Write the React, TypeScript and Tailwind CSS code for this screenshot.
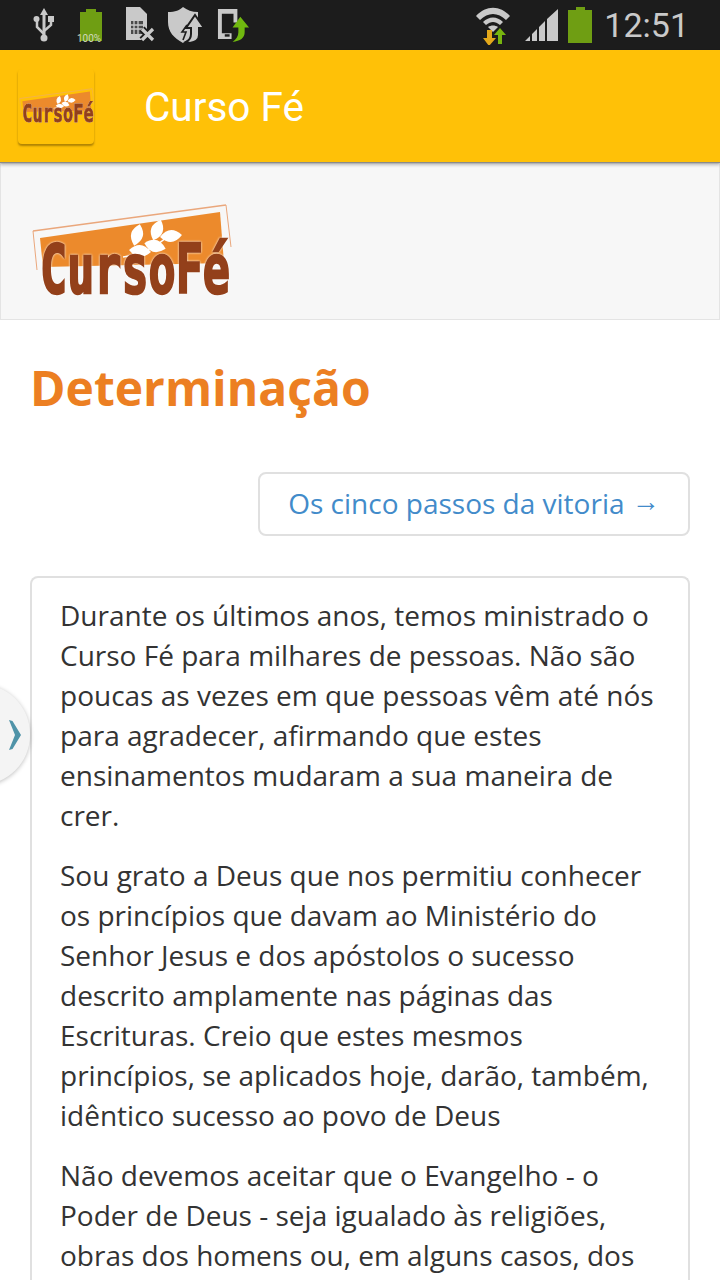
const OPEN = "font-['Open_Sans',sans-serif]";

const LEAVES = [
  "translate(106 30) rotate(-75)",
  "translate(126 25) rotate(-70)",
  "translate(140 31) rotate(-5)",
  "translate(124 41) rotate(15)",
  "translate(109 46) rotate(5)",
];

function Logo({ className }: { className: string }) {
  return (
    <svg viewBox="0 0 200 92" className={`overflow-visible ${className}`}>
      <path d="M2 26 L195 0" stroke="#eaa77c" strokeWidth="1.5" fill="none" />
      <path d="M2 26 L6 65" stroke="#eaa77c" strokeWidth="1" fill="none" />
      <path d="M195 0 L200 42" stroke="#eaa77c" strokeWidth="1" fill="none" />
      <polygon points="9,33 189,7 193,58 12,62" fill="#ec8a2c" />
      <path d="M92 52 C108 50 122 44 135 33" stroke="#fff" strokeWidth="1.5" fill="none" />
      {LEAVES.map((t) => (
        <path key={t} d="M-11 0 Q0 -12 11 0 Q0 12 -11 0 Z" transform={t} fill="#fff" />
      ))}
      <text
        x="9"
        y="88"
        textLength="190"
        lengthAdjust="spacingAndGlyphs"
        fontFamily="'DejaVu Sans Mono',monospace"
        fontWeight="700"
        fontSize="68"
        fill="#93401a"
        stroke="#93401a"
        strokeWidth="2.5"
        className="[filter:drop-shadow(0_0_1px_white)]"
      >
        CursoFé
      </text>
    </svg>
  );
}

function StatusLeft() {
  return (
    <div className="flex items-center">
      <svg viewBox="0 0 24 36" className="ml-[32px] w-[24px] h-[36px]">
        <path d="M12 1 L16 8 H13.5 V29 H10.5 V8 H8 Z" fill="#c9c9c9" />
        <path d="M12 27 L5 20 V14 M12 24 L19 18 V13" stroke="#c9c9c9" strokeWidth="2.5" fill="none" />
        <circle cx="4.5" cy="12" r="3" fill="#c9c9c9" />
        <rect x="16" y="9" width="6" height="6" fill="#c9c9c9" />
        <circle cx="12" cy="31" r="3.5" fill="#c9c9c9" />
      </svg>
      <div className="relative ml-[24px] w-[22px] h-[33px]">
        <div className="mx-auto w-[10px] h-[3px] bg-[#6f9e13]" />
        <div className="w-[22px] h-[29px] bg-[#6f9e13]" />
        <span className="absolute left-[-3px] bottom-[-2px] text-[10px] leading-[11px] text-[#cfd8bd] font-['Roboto',sans-serif]">100%</span>
      </div>
      <svg viewBox="0 0 30 36" className="ml-[23px] w-[30px] h-[36px]">
        <path d="M1 0 H15 L22 7 V33 H1 Z" fill="#c9c9c9" />
        <path d="M6 14 H18 V27 H6 Z" fill="#4a4a4a" />
        <path d="M9 14 V27 M13 14 V27 M6 18 H18 M6 22 H18" stroke="#c9c9c9" strokeWidth="1.3" />
        <path d="M17 22 L28 33 M28 22 L17 33" stroke="#1c1c1c" strokeWidth="7" />
        <path d="M17 22 L28 33 M28 22 L17 33" stroke="#c9c9c9" strokeWidth="3.2" />
      </svg>
      <svg viewBox="0 0 36 36" className="ml-[13px] w-[36px] h-[36px]">
        <path d="M0 5 C7 5 12 3 15 0 C19 3 24 5 30 5 V15 C30 25 24 31 15 36 C6 31 0 25 0 15 Z" fill="#c9c9c9" />
        <path d="M27 8 L36 21 H31 V28 C31 32 28 35 22 36 L18 35 C22 33 23 30 23 27 V21 H18 Z" fill="#c9c9c9" stroke="#1c1c1c" strokeWidth="2" />
        <path d="M19 18 L14 25 H18 L15 33" stroke="#1c1c1c" strokeWidth="1.6" fill="none" />
      </svg>
      <svg viewBox="0 0 34 34" className="ml-[13px] w-[33px] h-[33px]">
        <path d="M1 0 H21 V14 H17 V5 H5 V25 H15 V31 H1 Z" fill="#c9c9c9" />
        <rect x="8" y="26" width="5" height="2.5" fill="#1c1c1c" />
        <path d="M24 8 L33 19 H28.5 V24 C28.5 30 24 33 16 34 C20 31 22 28 22 24 V19 H16 Z" fill="#70b80f" />
      </svg>
    </div>
  );
}

function StatusRight() {
  return (
    <div className="flex items-center">
      <svg viewBox="0 0 36 40" className="w-[36px] h-[40px]">
        <path d="M1 11 C11 0 25 0 35 11 L31 15 C23 7 13 7 5 15 Z" fill="#c9c9c9" />
        <path d="M8 17 C14 11 22 11 28 17 L25 20 C20 16 16 16 11 20 Z" fill="#c9c9c9" />
        <path d="M13 22 C16 20 20 20 23 22 L18 27 Z" fill="#c9c9c9" />
        <path d="M13 26 H18 V34 H22 L15 42 L9 34 H13 Z" fill="#e3a81a" transform="translate(-1 -1)" />
        <path d="M21 33 H25 V24 H29 L23 17 L17 24 H21 Z" fill="#77b50f" transform="translate(2 6)" />
      </svg>
      <svg viewBox="0 0 34 34" className="ml-[14px] w-[34px] h-[34px]">
        <path d="M0 33 L5 28 V33 Z M7 26 L12 21 V33 H7 Z M14 19 L20 13 V33 H14 Z M22 11 L33 1 V33 H22 Z" fill="#c9c9c9" />
      </svg>
      <div className="ml-[9px] w-[24px] h-[36px]">
        <div className="mx-auto w-[9px] h-[3px] bg-[#6f9e13]" />
        <div className="w-[24px] h-[33px] bg-[#6f9e13]" />
      </div>
      <span className="ml-[12px] mr-[31px] text-[#c9c9c9] text-[34px] leading-[40px] font-['Roboto',sans-serif]">12:51</span>
    </div>
  );
}

const PARAGRAPHS = [
  "Durante os últimos anos, temos ministrado o Curso Fé para milhares de pessoas. Não são poucas as vezes em que pessoas vêm até nós para agradecer, afirmando que estes ensinamentos mudaram a sua maneira de crer.",
  "Sou grato a Deus que nos permitiu conhecer os princípios que davam ao Ministério do Senhor Jesus e dos apóstolos o sucesso descrito amplamente nas páginas das Escrituras. Creio que estes mesmos princípios, se aplicados hoje, darão, também, idêntico sucesso ao povo de Deus",
  "Não devemos aceitar que o Evangelho - o Poder de Deus - seja igualado às religiões, obras dos homens ou, em alguns casos, dos",
];

export default function App() {
  return (
    <div className={`relative w-[720px] h-[1280px] overflow-hidden bg-white ${OPEN}`}>
      <div className="h-[50px] bg-[#1c1c1c] flex items-center justify-between">
        <StatusLeft />
        <StatusRight />
      </div>

      <header className="relative z-10 h-[113px] bg-[#ffc107] flex items-center border-b border-[#8a8a8a] shadow-[0_2px_3px_rgba(0,0,0,0.25)]">
        <div className="ml-[18px] w-[76px] h-[75px] rounded-[4px] bg-[#ffc107] shadow-[0_2px_2px_rgba(110,80,0,0.55)] flex items-center justify-center">
          <Logo className="w-[75px] h-[36px]" />
        </div>
        <h1 className="ml-[50px] pt-[2px] text-white text-[40.5px] leading-[46px] font-['Roboto',sans-serif]">Curso Fé</h1>
      </header>

      <div className="h-[157px] bg-[#f7f7f7] border border-[#e4e4e4] pl-[30px] pt-[41px]">
        <Logo className="w-[200px] h-[92px]" />
      </div>

      <main className="px-[30px]">
        <h2 className="mt-[36px] text-[#ec7f22] text-[48px] leading-[64px] font-bold">Determinação</h2>

        <div className="mt-[52px] flex justify-end">
          <a className="w-[432px] h-[64px] pb-[2px] rounded-[8px] border-2 border-[#e0e0e0] flex items-center justify-center text-[#428bca] text-[28px] leading-[40px]">
            <span>Os cinco passos da vitoria <span className="inline-block -translate-y-[3px]">→</span></span>
          </a>
        </div>

        <section className="mt-[40px] rounded-t-[8px] border-2 border-b-0 border-[#e0e0e0] pl-[28px] pr-[29px] pt-[17px] pb-[20px] text-[#333333] text-[28px] leading-[40px]">
          {PARAGRAPHS.map((p) => (
            <p key={p} className="mb-[20px]">{p}</p>
          ))}
        </section>
      </main>

      <div className="absolute left-[-70px] top-[684px] w-[100px] h-[101px] rounded-full bg-[#f4f4f4] shadow-[0_1px_4px_rgba(0,0,0,0.25)] flex items-center justify-end pr-[9px]">
        <svg viewBox="0 0 12 30" className="w-[12px] h-[30px]">
          <path d="M0 0 L3.5 1 L12 15 L3.5 29 L0 30 L6 15 Z" fill="#4f93a8" />
        </svg>
      </div>
    </div>
  );
}
